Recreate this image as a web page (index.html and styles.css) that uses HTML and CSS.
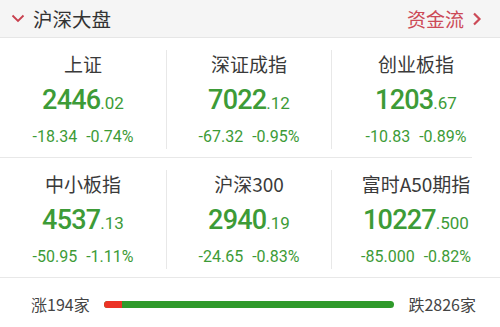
FILE: index.html
```html
<!DOCTYPE html>
<html lang="zh-CN">
<head>
  <meta charset="UTF-8" />
  <meta name="viewport" content="width=device-width, initial-scale=1.0"/>
  <title>沪深大盘</title>
  <link rel="stylesheet" href="styles.css">
</head>
<body>
  <div class="header">
    <div class="title">
      <svg class="arrow-down" width="14" height="9" viewBox="0 0 14 9"><path d="M1.5 1.5 L7 7 L12.5 1.5" fill="none" stroke="#c8404e" stroke-width="1.8"/></svg>
      <span>沪深大盘</span>
    </div>
    <div class="flow">
      <span>资金流</span>
      <svg width="10" height="14" viewBox="0 0 10 14"><path d="M2 1.5 L7.5 7 L2 12.5" fill="none" stroke="#cc4a57" stroke-width="2.2"/></svg>
    </div>
  </div>

  <div class="row first">
    <div class="cell">
      <div class="name">上证</div>
      <div class="price">2446<small>.02</small></div>
      <div class="change"><span>-18.34</span><span>-0.74%</span></div>
    </div>
    <div class="cell">
      <div class="name">深证成指</div>
      <div class="price">7022<small>.12</small></div>
      <div class="change"><span>-67.32</span><span>-0.95%</span></div>
    </div>
    <div class="cell">
      <div class="name">创业板指</div>
      <div class="price">1203<small>.67</small></div>
      <div class="change"><span>-10.83</span><span>-0.89%</span></div>
    </div>
  </div>

  <div class="row">
    <div class="cell">
      <div class="name">中小板指</div>
      <div class="price">4537<small>.13</small></div>
      <div class="change"><span>-50.95</span><span>-1.11%</span></div>
    </div>
    <div class="cell">
      <div class="name">沪深300</div>
      <div class="price">2940<small>.19</small></div>
      <div class="change"><span>-24.65</span><span>-0.83%</span></div>
    </div>
    <div class="cell">
      <div class="name">富时A50期指</div>
      <div class="price">10227<small>.500</small></div>
      <div class="change"><span>-85.000</span><span>-0.82%</span></div>
    </div>
  </div>

  <div class="breadth">
    <span>涨194家</span>
    <div class="bar"><div class="up" style="width: 6.4%"></div></div>
    <span>跌2826家</span>
  </div>
</body>
</html>
```

FILE: styles.css
```css
body {
  margin: 0;
  width: 500px;
  height: 327px;
  overflow: hidden;
  background: #fff;
  font-family: "Noto Sans CJK SC", "Noto Sans", sans-serif;
  color: #333;
}

.header {
  height: 37px;
  background: #f5f5f5;
  border-bottom: 1px solid #e6e6e6;
  display: flex;
  align-items: center;
  justify-content: space-between;
  padding: 0 18px 0 11px;
}

.title {
  display: flex;
  align-items: center;
  gap: 8px;
  font-size: 19.5px;
  color: #333;
}

.flow {
  display: flex;
  align-items: center;
  gap: 8px;
  font-size: 19px;
  color: #cc4a57;
}

.row {
  display: grid;
  grid-template-columns: 166px 165px 1fr;
  height: 120px;
  border-bottom: 1px solid #e8e8e8;
  box-sizing: border-box;
}

/* first divider stops short of the right edge */
.row.first {
  border-bottom: none;
  background: linear-gradient(#e8e8e8, #e8e8e8) left bottom / 472px 1px no-repeat;
}

.cell {
  margin: 12px 0;
  padding: 2px 0;
  text-align: center;
}

.cell + .cell {
  border-left: 1px solid #e8e8e8;
}

.name {
  font-size: 19px;
  line-height: 24px;
  color: #3a3a3a;
}

.price {
  margin-top: 7px;
  font-family: Roboto, "DejaVu Sans", sans-serif;
  font-weight: 500;
  font-size: 27px;
  line-height: 34px;
  letter-spacing: -0.8px;
  color: #3d9b37;
}

.price small {
  font-size: 17px;
  font-weight: 400;
  letter-spacing: 0;
}

.change {
  margin-top: 7px;
  font-family: Roboto, "DejaVu Sans", sans-serif;
  font-size: 16px;
  line-height: 20px;
  color: #3d9b37;
  display: flex;
  justify-content: center;
  gap: 9px;
}

.breadth {
  display: flex;
  align-items: center;
  height: 48px;
  padding: 4px 24px 0 31px;
  box-sizing: border-box;
  gap: 14px;
  font-size: 16px;
  color: #444;
}

.bar {
  flex: 1;
  height: 7px;
  border-radius: 4px;
  background: #2f9a2a;
  overflow: hidden;
}

.up {
  height: 100%;
  background: #ec3326;
}
```
